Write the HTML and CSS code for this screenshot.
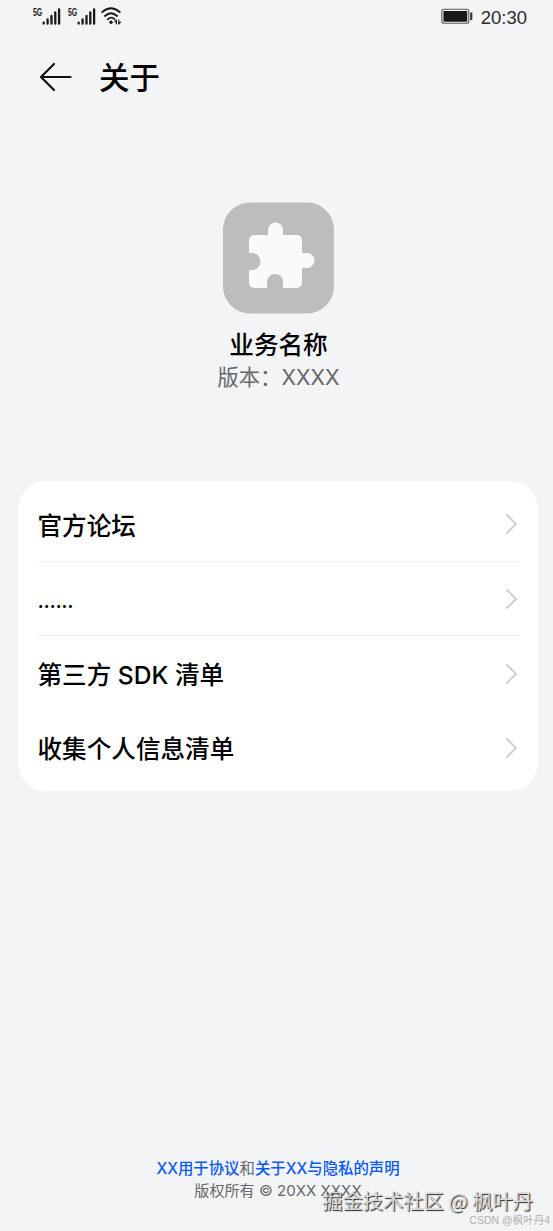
FILE: index.html
```html
<!DOCTYPE html>
<html lang="zh-CN">
<head>
    <meta charset="UTF-8">
    <meta name="viewport" content="width=device-width, initial-scale=1.0">
    <title>关于</title>
    <link rel="stylesheet" href="styles.css">
</head>
<body>
    <div class="page">
        <div class="status-bar">
            <div class="status-left">
                <span class="net">5G</span>
                <svg class="signal" width="19" height="18" viewBox="0 0 19 18"><path d="M1.7 14.6v1M5.6 11.5v4.2M9.5 7.9v7.8M13.3 4.5v11.2M17.1 1.3v14.4"/></svg>
                <span class="net net-second">5G</span>
                <svg class="signal" width="19" height="18" viewBox="0 0 19 18"><path d="M1.7 14.6v1M5.6 11.5v4.2M9.5 7.9v7.8M13.3 4.5v11.2M17.1 1.3v14.4"/></svg>
                <svg class="wifi" width="21" height="18" viewBox="0 0 21 18">
                    <path d="M1.2 5.2Q10 -2.6 18.8 5.2M3.9 9Q10 3.4 16.1 9M6.7 12.3Q10 9.2 13.3 12"/>
                    <circle cx="10" cy="15.2" r="1.7"/>
                    <path class="wifi-data" d="M15.4 13v4M15.2 13l-1.4 1.8M17.8 13v4M18 17l1.4-1.8"/>
                </svg>
            </div>
            <div class="status-right">
                <svg width="32" height="16" viewBox="0 0 32 16">
                    <rect x="0.8" y="1.3" width="27" height="14" rx="2.3" fill="none" stroke="#55575a" stroke-width="1.1"/>
                    <rect x="2.4" y="2.9" width="23.8" height="10.8" rx="1" fill="#17191c"/>
                    <path d="M30.3 4.5v7.6" stroke="#292b2e" stroke-width="2"/>
                </svg>
                <span class="time">20:30</span>
            </div>
        </div>

        <div class="title-bar">
            <svg class="back" width="34" height="30" viewBox="0 0 34 30"><path d="M16 2L3 15l13 13M3 15H32.5"/></svg>
            <h1>关于</h1>
        </div>

        <div class="app-info">
            <svg class="app-icon" width="111" height="112" viewBox="0 0 111 112">
                <rect y="0.5" width="111" height="111" rx="27" fill="#bdbdbd"/>
                <path fill="#fafafa" d="M31 33H45V28a7.5 7.5 0 0 1 15 0V33H74a5 5 0 0 1 5 5V51H84a7.5 7.5 0 0 1 0 15H79V81a5 5 0 0 1-5 5H60V80a7.5 7.5 0 0 0-16 0V86H31a5 5 0 0 1-5-5V68H29a8.5 8.5 0 0 0 0-17H26V38a5 5 0 0 1 5-5Z"/>
            </svg>
            <div class="app-name">业务名称</div>
            <div class="app-version">版本：XXXX</div>
        </div>

        <div class="card">
            <div class="row row-line">
                <span>官方论坛</span>
                <svg class="arrow" width="13" height="22" viewBox="0 0 13 22"><path d="M1.5 1.5L11 11l-9.5 9.5"/></svg>
            </div>
            <div class="row row-line">
                <span class="dots">......</span>
                <svg class="arrow" width="13" height="22" viewBox="0 0 13 22"><path d="M1.5 1.5L11 11l-9.5 9.5"/></svg>
            </div>
            <div class="row">
                <span>第三方 SDK 清单</span>
                <svg class="arrow" width="13" height="22" viewBox="0 0 13 22"><path d="M1.5 1.5L11 11l-9.5 9.5"/></svg>
            </div>
            <div class="row">
                <span>收集个人信息清单</span>
                <svg class="arrow" width="13" height="22" viewBox="0 0 13 22"><path d="M1.5 1.5L11 11l-9.5 9.5"/></svg>
            </div>
        </div>

        <div class="footer">
            <div><a>XX用于协议</a>和<a>关于XX与隐私的声明</a></div>
            <div class="copyright">版权所有 © 20XX XXXX</div>
        </div>

        <div class="watermark">掘金技术社区 @ 枫叶丹</div>
        <div class="watermark-small">CSDN @枫叶丹4</div>
    </div>
</body>
</html>
```
FILE: styles.css
```css
* {
    box-sizing: border-box;
}

body {
    margin: 0;
    background: #f2f4f6;
    font-family: Inter, "Noto Sans CJK SC", sans-serif;
    color: #000;
}

.page {
    position: relative;
    display: flex;
    flex-direction: column;
    height: 1231px;
    overflow: hidden;
}

/* Status bar */
.status-bar {
    display: flex;
    justify-content: space-between;
    height: 34px;
    padding: 8px 26px 0 33px;
}

.status-left,
.status-right {
    display: flex;
    align-items: flex-start;
}

.net {
    width: 9px;
    font: bold 10.5px/9px "Liberation Sans", sans-serif;
    transform: scaleX(0.66);
    transform-origin: left;
    color: #222;
}

.net-second {
    margin-left: 7px;
}

.signal path {
    stroke: #17191c;
    stroke-width: 2.3;
    stroke-linecap: round;
}

.wifi {
    margin-left: 5px;
    margin-top: -1px;
    fill: #17191c;
}

.wifi path {
    fill: none;
    stroke: #17191c;
    stroke-width: 1.8;
    stroke-linecap: round;
}

.wifi .wifi-data {
    stroke-width: 1.2;
}

.time {
    margin-left: 8px;
    font: 18.5px/19px "Liberation Sans", sans-serif;
    color: #292b2e;
}

/* Title */
.title-bar {
    display: flex;
    align-items: center;
    height: 86px;
    padding-left: 38px;
}

.back path {
    fill: none;
    stroke: #111;
    stroke-width: 2.2;
    stroke-linecap: round;
    stroke-linejoin: round;
}

h1 {
    margin: 2px 0 0 27px;
    font-size: 30.5px;
    line-height: 40px;
    font-weight: 500;
}

/* App info */
.app-info {
    display: flex;
    flex-direction: column;
    align-items: center;
    height: 361px;
    padding: 82px 0 0 4px;
}

.app-name {
    margin-top: 13px;
    font-size: 24.6px;
    line-height: 36px;
    font-weight: 500;
}

.app-version {
    font-size: 21.3px;
    line-height: 28px;
    color: #66686a;
}

/* List */
.card {
    width: 520px;
    height: 310px;
    margin-left: 18px;
    padding: 6.8px 18px 0 19.5px;
    border-radius: 28px;
    background: #fff;
}

.row {
    display: flex;
    align-items: center;
    justify-content: space-between;
    height: 74.3px;
    padding-right: 2px;
    font-size: 24.6px;
    line-height: 36px;
    font-weight: 500;
}

.row span {
    padding-top: 3px;
}

.row-line {
    border-bottom: 1px solid #f0f0f0;
}

.row .dots {
    padding-top: 5px;
    font-size: 21px;
    letter-spacing: -0.4px;
}

.arrow path {
    fill: none;
    stroke: #ccc;
    stroke-width: 1.8;
}

/* Footer */
.footer {
    margin-top: auto;
    padding: 0 0 29px 3px;
    font-size: 15.4px;
    line-height: 22px;
    text-align: center;
    color: #66686a;
}

.footer a {
    color: #0a59f7;
    font-weight: 500;
}

.copyright {
    font-size: 15.1px;
}

.watermark {
    position: absolute;
    right: 20px;
    bottom: 17px;
    font-family: "Noto Sans CJK SC", sans-serif;
    font-size: 20.3px;
    line-height: 28px;
    color: #d5d7d9;
    text-shadow: 1px 1px 1px #222;
}

.watermark-small {
    position: absolute;
    right: 3px;
    bottom: 3px;
    font-family: "Liberation Sans", "Noto Sans CJK SC", sans-serif;
    font-size: 10.5px;
    line-height: 16px;
    color: #aeb0b3;
}
```
